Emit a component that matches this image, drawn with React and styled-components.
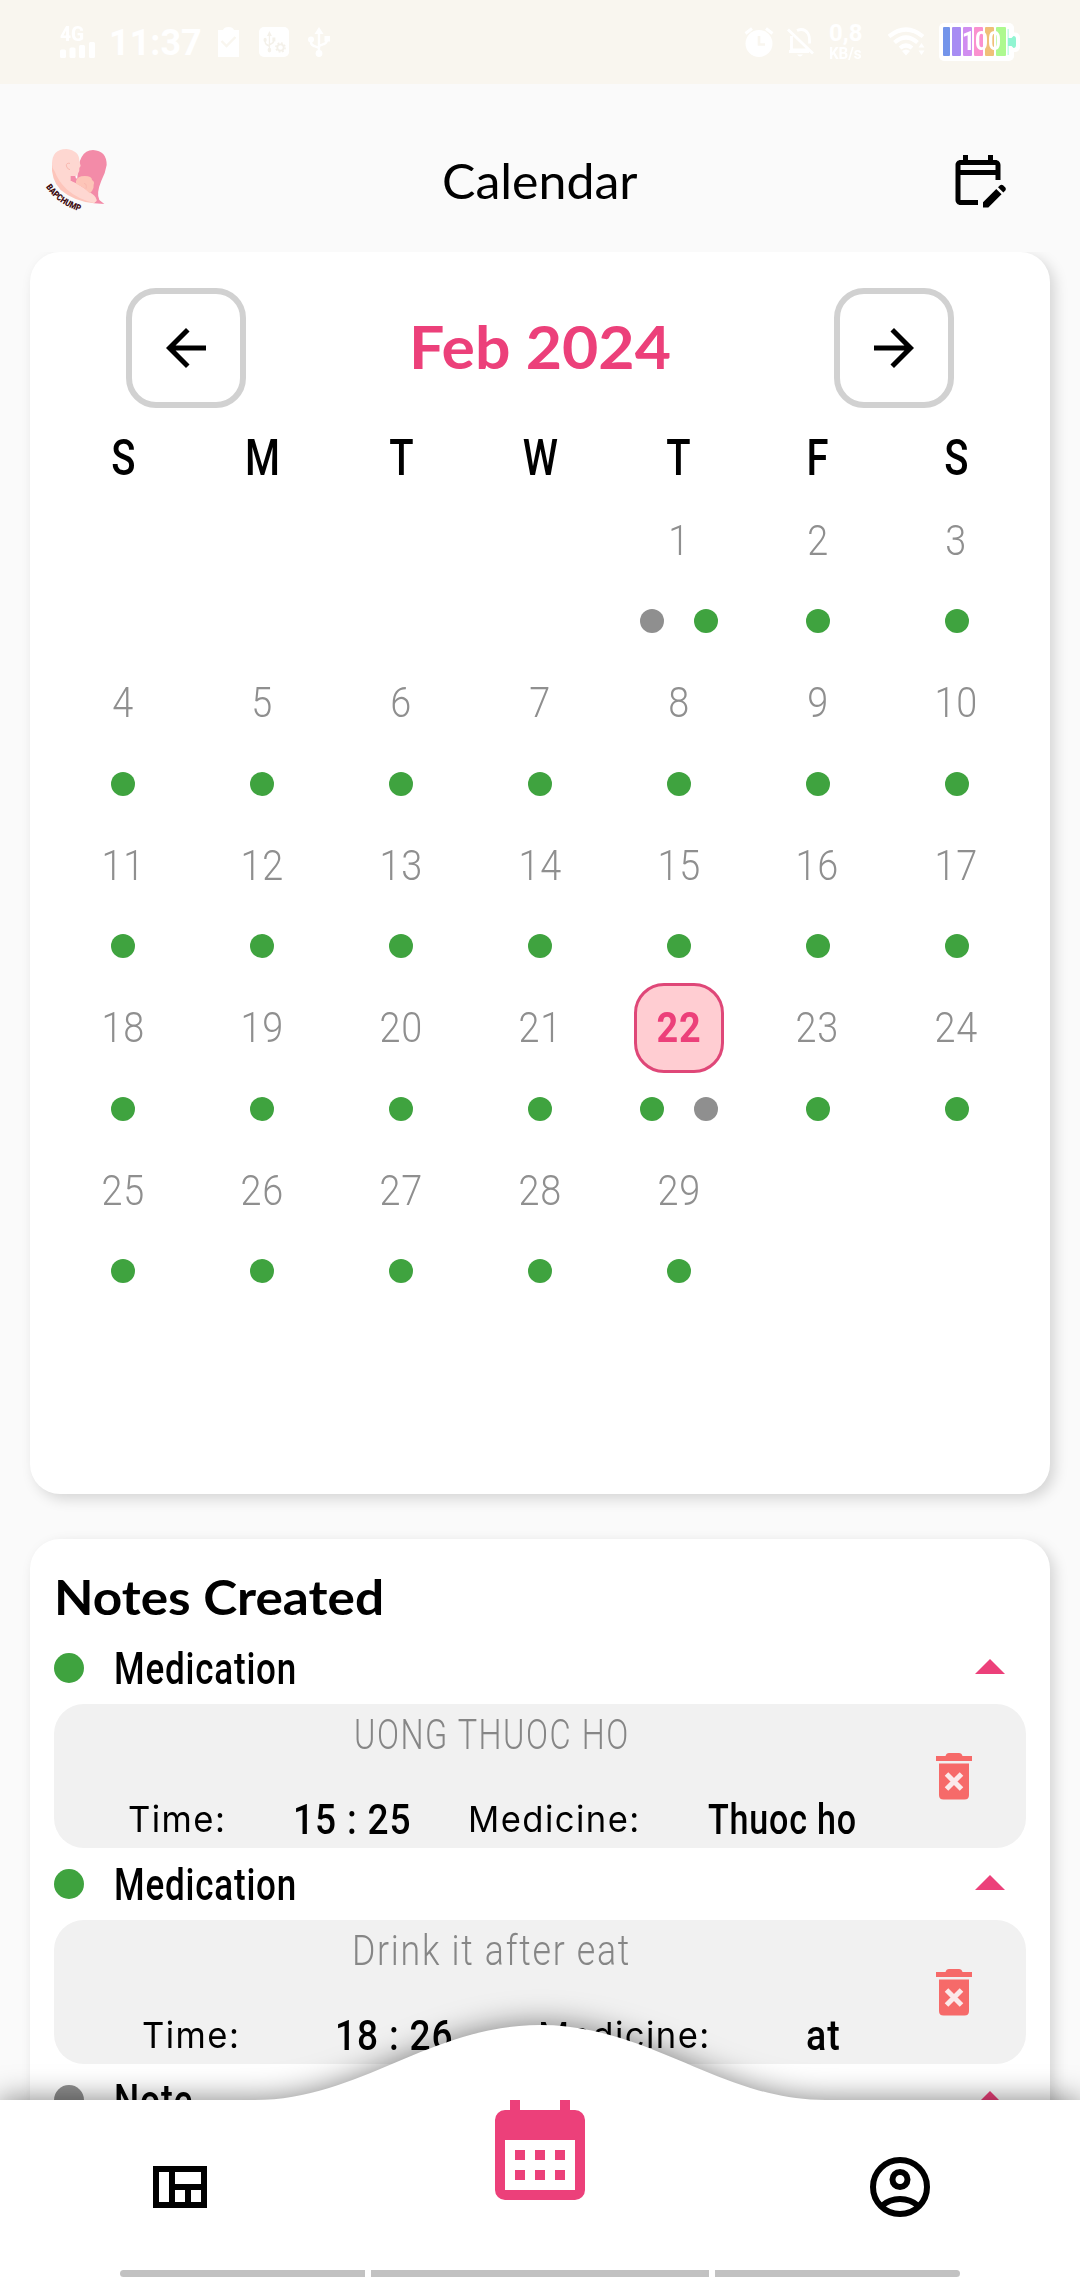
import React, { useLayoutEffect, useRef, useState } from "react";
import styled, { createGlobalStyle, css } from "styled-components";

const PINK = "#ec407a";
const GREEN = "#3fa33f";
const GREY = "#8f8f8f";

const Global = createGlobalStyle`
  * { box-sizing: border-box; }
  body { margin: 0; background: #fafafa; }
`;

const geometric = css`font-family: Lato, "Open Sans", sans-serif;`;
const narrow = css`font-family: Roboto, "Liberation Sans", sans-serif;`;

const Screen = styled.div`
  width: 1080px;
  height: 2280px;
  overflow: hidden;
  display: flex;
  flex-direction: column;
  background: #fafafa;
  color: #000;
  ${narrow}
  svg { display: block; flex: none; }
`;

/* Text set to an exact width: measured once, then scaled horizontally */
const FitBox = styled.span`
  display: block;
  width: ${(p) => p.$w}px;
  white-space: nowrap;
  text-align: left;
`;
const FitInner = styled.span`
  display: inline-block;
  transform-origin: 0 50%;
`;
function Fit({ w, children, className }) {
  const ref = useRef(null);
  const [scale, setScale] = useState(1);
  useLayoutEffect(() => {
    setScale(w / ref.current.offsetWidth);
  }, [w]);
  return (
    <FitBox $w={w} className={className}>
      <FitInner ref={ref} style={{ transform: `scaleX(${scale})` }}>{children}</FitInner>
    </FitBox>
  );
}

/* ---------- status bar ---------- */
const StatusBar = styled.div`
  flex: none;
  height: 84px;
  padding: 0 60px;
  display: flex;
  align-items: center;
  justify-content: space-between;
  background: #f9f6ef;
  color: #fff;
`;
const StatusGroup = styled.div`
  display: flex;
  align-items: center;
`;
const Slot = styled.div`
  margin-left: ${(p) => p.$gap || 0}px;
`;
const Signal = styled.div`
  width: 35px;
  height: 30px;
  display: flex;
  flex-direction: column;
  justify-content: space-between;
`;
const Network = styled(Fit)`
  font-size: 20px;
  font-weight: 800;
  line-height: 15px;
  height: 15px;
`;
const Clock = styled(Fit)`
  font-size: 36px;
  font-weight: 700;
  line-height: 36px;
  transform: translateY(1px);
`;
const Speed = styled.div`
  height: 38px;
  font-weight: 700;
  display: flex;
  flex-direction: column;
  justify-content: space-between;
`;
const SpeedValue = styled(Fit)`
  font-size: 24px;
  line-height: 20px;
  height: 20px;
`;
const SpeedUnit = styled(Fit)`
  font-size: 16px;
  line-height: 14px;
  height: 14px;
`;
const Battery = styled.div`
  position: relative;
  width: 81px;
  height: 38px;
`;
const Charge = styled(Fit)`
  position: absolute;
  left: 23px;
  top: 7px;
  font-size: 25px;
  font-weight: 700;
  line-height: 24px;
`;

const usbPath = (
  <>
    <path d="M11 3v22M3 12v3q0 3 3 4l5 2M19 10v2q0 4-3 5l-5 2" fill="none" stroke="currentColor" strokeWidth="2.4" />
    <path d="M11 0l4.5 7h-9z" fill="currentColor" />
    <circle cx="3" cy="12.5" r="3" fill="currentColor" />
    <rect x="16.5" y="9" width="5.5" height="5.5" fill="currentColor" />
    <circle cx="11" cy="26.5" r="3.4" fill="currentColor" />
  </>
);

function Status() {
  const cells = [
    [4, 7, "#7394ea"], [13, 9, "#a78cf3"], [24, 9, "#d08ef0"],
    [35, 9, "#fa91cf"], [46, 9, "#efc078"], [57, 10, "#adf98f"],
  ];
  return (
    <StatusBar>
      <StatusGroup>
        <Signal>
          <Network w={24}>4G</Network>
          <svg width="35" height="16" viewBox="0 0 35 16" fill="#fff">
            <rect x="0" y="7.5" width="6" height="8.5" rx="1.5" />
            <rect x="9.5" y="5.5" width="6" height="10.5" rx="1.5" />
            <rect x="19" y="3" width="6" height="13" rx="1.5" />
            <rect x="29" y="0" width="6" height="16" rx="1.5" />
          </svg>
        </Signal>
        <Slot $gap={14}><Clock w={93}>11:37</Clock></Slot>
        <Slot $gap={16}>
          <svg width="21" height="30" viewBox="0 0 21 30">
            <path d="M0 3h5q1-3 5.500-3t5.500 3h5v27H0z" fill="#fff" />
            <path d="M3.500 14l5 5 9-9" fill="none" stroke="#f9f6ef" strokeWidth="2.400" />
          </svg>
        </Slot>
        <Slot $gap={20}>
          <svg width="30" height="30" viewBox="0 0 30 30" color="#f4f1ea">
            <rect width="30" height="30" rx="5" fill="#fff" />
            <g transform="translate(4.500 4) scale(.54 .72)">{usbPath}</g>
            <circle cx="21.500" cy="20.500" r="3.200" fill="#fff" stroke="#f4f1ea" strokeWidth="1.800" />
            <circle cx="21.500" cy="20.500" r="4.600" fill="none" stroke="#f4f1ea" strokeWidth="1.500" strokeDasharray="1.800 1.810" />
          </svg>
        </Slot>
        <Slot $gap={19}>
          <svg width="22" height="30" viewBox="0 0 22 30">{usbPath}</svg>
        </Slot>
      </StatusGroup>
      <StatusGroup>
        <svg width="30" height="30" viewBox="0 0 30 30">
          <circle cx="15" cy="16.500" r="13.500" fill="#fff" />
          <path d="M1.500 6.500L8 1.500M28.500 6.500L22 1.500" stroke="#fff" strokeWidth="3" />
          <path d="M15 9v8.500h6" fill="none" stroke="#f9f6ef" strokeWidth="2.600" />
        </svg>
        <Slot $gap={13}>
          <svg width="28" height="30" viewBox="0 0 28 30" fill="none" stroke="#fff" strokeWidth="2.800">
            <path d="M1 2.500l25 24M4.500 9v14H22M2 24.500h20M10 3.500q7-3 11 3 2 3 1.500 10" />
            <path d="M10 27.500h6q-3 4-6 0z" fill="#fff" stroke="none" />
          </svg>
        </Slot>
        <Slot $gap={14}>
          <Speed>
            <SpeedValue w={33}>0,8</SpeedValue>
            <SpeedUnit w={33}>KB/s</SpeedUnit>
          </Speed>
        </Slot>
        <Slot $gap={26}>
          <svg width="37" height="30" viewBox="0 0 37 30" fill="none" stroke="#fff" strokeWidth="4.200">
            <path d="M1 9.500q17-14 34 0M6.500 15.500q11.500-10 23 0M12 21q6-5 12 0" />
            <path d="M14 24q4-3 8 0l-4 4.500zM30.500 20.500l3-4.500 3 4.500zM30.500 23.500l3 4.500 3-4.500z" fill="#fff" stroke="none" />
          </svg>
        </Slot>
        <Slot $gap={14}>
          <Battery>
            <svg width="81" height="38" viewBox="0 0 81 38">
              <rect width="75" height="38" rx="5" fill="#fff" />
              <rect x="68" y="9.500" width="13" height="19.500" rx="5" fill="#fff" />
              {cells.map(([x, w, c]) => (
                <rect key={x} x={x} y="4" width={w} height="29" rx="1" fill={c} />
              ))}
              <path d="M69.500 6v9h3l2-2q2.500 0 2.500 3v6q0 3-2.500 3l-2-2h-3v9h-.8V6z" fill="#91f5d2" />
            </svg>
            <Charge w={39}>100</Charge>
          </Battery>
        </Slot>
      </StatusGroup>
    </StatusBar>
  );
}

/* ---------- header ---------- */
const Header = styled.header`
  flex: none;
  height: 168px;
  padding: 24px 45px 0;
  display: grid;
  grid-template-columns: 1fr auto 1fr;
  align-items: center;
`;
const Title = styled(Fit)`
  ${geometric}
  font-size: 48px;
  line-height: 56px;
  padding-top: 1px;
`;
const HeaderAction = styled.div`
  justify-self: end;
  margin-right: 27px;
`;

function Logo() {
  return (
    <svg width="66" height="70" viewBox="43 45 198 210">
      <path d="M140 145Q142 60 187 60Q228 62 228 105Q224 130 212 152Q196 190 206 210L221 222L190 220L118 150Z" fill="#f38ba8" />
      <path d="M64 97Q60 150 90 180Q130 214 190 220L198 210L120 160L70 100Z" fill="#fdc5bb" />
      <path d="M64 103Q64 57 107 57Q146 62 146 92L150 108L146 114Q147 124 143 128Q140 139 131 138L122 138V153Q140 160 160 174L186 193Q198 202 198 213L190 219Q140 207 108 178Q82 152 73 126Q64 116 64 103Z" fill="#fed7d1" />
      <path d="M120 138H134L138 154L120 153Z" fill="#f38ba8" />
      <path d="M136 153Q140 138 162 138Q184 138 184 150Q193 155 189 164Q190 176 184 183L177 190Q158 170 136 161Z" fill="#fdc5b8" />
      <path d="M118 100Q106 98 107 108Q110 118 118 119M160 160Q170 162 166 176" fill="none" stroke="#f9b9b0" strokeWidth="3" />
      <path id="logo-arc" d="M45 171Q82 224 150 245" fill="none" />
      <text fill="#3c0a10" fontFamily="Roboto, sans-serif" fontSize="27" fontWeight="900">
        <textPath href="#logo-arc" textLength="128" lengthAdjust="spacingAndGlyphs">BAPCHUMP</textPath>
      </text>
    </svg>
  );
}

/* ---------- cards ---------- */
const Main = styled.main`
  flex: 1;
  min-height: 0;
  overflow: hidden;
  padding: 0 30px;
  display: flex;
  flex-direction: column;
  gap: 45px;
`;
const Card = styled.section`
  flex: none;
  height: ${(p) => p.$h}px;
  padding: ${(p) => p.$pad};
  border-radius: 30px;
  background: #fff;
  box-shadow: 5px 5px 14px rgba(0, 0, 0, 0.15);
`;

/* ---------- calendar ---------- */
const MonthBar = styled.div`
  display: flex;
  align-items: center;
  justify-content: space-between;
  padding: 0 72px;
`;
const MonthButton = styled.button`
  width: 120px;
  height: 120px;
  padding: 0;
  display: grid;
  place-items: center;
  border: 6px solid #d1d1d1;
  border-radius: 30px;
  background: #fff;
`;
const Month = styled(Fit)`
  ${geometric}
  margin-top: -3px;
  font-size: 59px;
  font-weight: 700;
  line-height: 70px;
  color: ${PINK};
`;
const Week = styled.div`
  display: grid;
  grid-template-columns: repeat(7, 1fr);
  text-align: center;
`;
const WeekHead = styled(Week)`
  height: 87px;
  padding-top: 12px;
  line-height: 76px;
  font-size: 50px;
  font-weight: 500;
`;
const Condensed = styled.span`
  display: inline-block;
  transform: scaleX(${(p) => p.$x});
`;
const Day = styled.div`
  height: 162.5px;
  display: flex;
  flex-direction: column;
  align-items: center;
  gap: 24px;
`;
const DayNumber = styled.div`
  width: 90px;
  height: 90px;
  display: grid;
  place-items: center;
  font-size: 42px;
  font-weight: 300;
  letter-spacing: 1px;
  color: ${GREY};
  border: 3px solid transparent;
  border-radius: 30px;
  ${(p) => p.$selected && css`
    color: ${PINK};
    font-weight: 700;
    background: #ffcdd2;
    border-color: #df4778;
  `}
`;
const Dots = styled.div`
  display: flex;
  gap: 30px;
`;
const Dot = styled.i`
  display: block;
  flex: none;
  width: ${(p) => p.$size}px;
  height: ${(p) => p.$size}px;
  border-radius: 50%;
  background: ${(p) => p.$color};
`;

const marks = { 1: [GREY, GREEN], 22: [GREEN, GREY] };
const cells = [null, null, null, null, ...Array.from({ length: 29 }, (_, i) => i + 1)];

function Calendar() {
  return (
    <Card $h={1242} $pad="36px 24px 0">
      <MonthBar>
        <MonthButton aria-label="Previous month">
          <svg width="60" height="60" viewBox="0 0 24 24"><path d="M20 11H7.830l5.590-5.590L12 4l-8 8 8 8 1.410-1.410L7.830 13H20v-2z" /></svg>
        </MonthButton>
        <Month w={262}>Feb 2024</Month>
        <MonthButton aria-label="Next month">
          <svg width="60" height="60" viewBox="0 0 24 24"><path d="M12 4l-1.410 1.410L16.170 11H4v2h12.170l-5.580 5.590L12 20l8-8z" /></svg>
        </MonthButton>
      </MonthBar>
      <WeekHead>
        {["S", "M", "T", "W", "T", "F", "S"].map((d, i) => (
          <Condensed key={i} $x={0.8}>{d}</Condensed>
        ))}
      </WeekHead>
      <Week>
        {cells.map((n, i) => (
          <Day key={i}>
            {n && (
              <>
                <DayNumber $selected={n === 22}><Condensed $x={0.9}>{n}</Condensed></DayNumber>
                <Dots>
                  {(marks[n] || [GREEN]).map((c, k) => <Dot key={k} $size={24} $color={c} />)}
                </Dots>
              </>
            )}
          </Day>
        ))}
      </Week>
    </Card>
  );
}

/* ---------- notes ---------- */
const NotesTitle = styled(Fit)`
  ${geometric}
  height: 69px;
  line-height: 69px;
  font-size: 47px;
  font-weight: 700;
`;
const NoteHead = styled.div`
  height: 72px;
  display: flex;
  align-items: center;
  gap: 30px;
`;
const NoteKind = styled(Fit)`
  padding-top: 2px;
  font-size: 44px;
  font-weight: 500;
  letter-spacing: 1px;
  line-height: 70px;
`;
const Caret = styled.div`
  margin-left: auto;
`;
const NoteBody = styled.div`
  height: 144px;
  display: grid;
  grid-template-columns: 873px 36px;
  column-gap: 9px;
  align-items: center;
  border-radius: 30px;
  background: #f1f1f1;
`;
const NoteContent = styled.div`
  height: 144px;
`;
const Description = styled(Fit)`
  margin: 0 auto;
  padding: 2px 0 0 1px;
  font-size: 42px;
  font-weight: 300;
  letter-spacing: 2px;
  line-height: 58px;
  color: #868686;
`;
const Fields = styled.div`
  height: 84px;
  padding: 26px 0 0 ${(p) => p.$start}px;
  display: flex;
  align-items: center;
  gap: ${(p) => p.$gap}px;
`;
const Label = styled(Fit)`
  font-family: Inter, Roboto, sans-serif;
  font-size: 36px;
  letter-spacing: 1.5px;
  line-height: 50px;
`;
const MedicineLabel = styled(Label)`
  margin-left: -12px;
`;
const Value = styled(Fit)`
  font-size: 43px;
  font-weight: 500;
  letter-spacing: 1px;
  line-height: 50px;
`;
const Time = styled(Value)`
  margin-left: -2px;
`;
const Medicine = styled(Value)`
  margin-left: -2px;
`;

function Note({ kind, kindWidth, color, text, textWidth, time, medicine, medicineWidth, start, gap }) {
  return (
    <article>
      <NoteHead>
        <Dot $size={30} $color={color} />
        <NoteKind w={kindWidth}>{kind}</NoteKind>
        <Caret><svg width="72" height="72" viewBox="0 0 24 24"><path d="M7 14l5-5 5 5z" fill={PINK} /></svg></Caret>
      </NoteHead>
      {text && (
        <NoteBody>
          <NoteContent>
            <Description w={textWidth}>{text}</Description>
            <Fields $start={start} $gap={gap}>
              <Label w={98}>Time:</Label>
              <Time w={118}>{time}</Time>
              <MedicineLabel w={173}>Medicine:</MedicineLabel>
              <Medicine w={medicineWidth}>{medicine}</Medicine>
            </Fields>
          </NoteContent>
          <svg width="36" height="47" viewBox="0 0 36 47" fill="#f66a69">
            <path d="M0 3h9.500q.8-3 3.500-3h10q2.700 0 3.500 3H36v5H0zM3 10.500h30V42q0 4.500-4.500 4.500h-21Q3 46.500 3 42z" />
            <path d="M10.500 21l15 15M25.500 21l-15 15" stroke="#fbeaea" strokeWidth="5" />
          </svg>
        </NoteBody>
      )}
    </article>
  );
}

/* ---------- bottom navigation ---------- */
const Nav = styled.nav`
  position: relative;
  flex: none;
  height: 180px;
`;
const Wave = styled.svg`
  position: absolute;
  left: 0;
  top: -75px;
  overflow: visible;
  filter: drop-shadow(0 0 15px rgba(0, 0, 0, 0.5));
`;
const NavItems = styled.div`
  position: relative;
  height: 170px;
  display: grid;
  grid-template-columns: repeat(3, 1fr);
  justify-items: center;
  align-items: start;
`;
const NavItem = styled.div`
  margin-top: ${(p) => p.$top}px;
`;
const Gesture = styled.div`
  position: relative;
  height: 7px;
  margin: 0 120px;
  border-radius: 4px;
  overflow: hidden;
  display: grid;
  grid-template-columns: 245px 338px 245px;
  gap: 6px;
`;
const GestureBar = styled.i`
  background: #c2c2c2;
`;

export default function App() {
  return (
    <Screen>
      <Global />
      <Status />
      <Header>
        <Logo />
        <Title w={196}>Calendar</Title>
        <HeaderAction>
          <svg width="60" height="60" viewBox="0 0 24 24">
            <path d="M5 10h14v2h2V6c0-1.100-.9-2-2-2h-1V2h-2v2H8V2H6v2H5c-1.110 0-1.990.9-1.990 2L3 20c0 1.100.89 2 2 2h7v-2H5V10zm0-4h14v2H5V6zm17.840 10.280-.71.71-2.120-2.120.71-.71c.39-.39 1.020-.39 1.410 0l.71.71c.39.39.39 1.020 0 1.410zm-3.540-.7 2.120 2.120-5.300 5.300H14v-2.120l5.300-5.300z" />
          </svg>
        </HeaderAction>
      </Header>
      <Main>
        <Calendar />
        <Card $h={780} $pad="24px 24px 0">
          <NotesTitle w={330}>Notes Created</NotesTitle>
          <Note kind="Medication" kindWidth={183} color={GREEN} text="UONG THUOC HO" textWidth={276} time="15 : 25" medicine="Thuoc ho" medicineWidth={149} start={74} gap={69} />
          <Note kind="Medication" kindWidth={183} color={GREEN} text="Drink it after eat" textWidth={279} time="18 : 26" medicine="at" medicineWidth={35} start={88} gap={97} />
          <Note kind="Note" kindWidth={79} color={GREY} />
        </Card>
      </Main>
      <Nav>
        <Wave width="1080" height="255" viewBox="0 0 1080 255">
          <path d="M0 75H255C360 75 430 0 540 0S720 75 825 75H1080V255H0Z" fill="#fff" />
        </Wave>
        <NavItems>
          <NavItem $top={51}>
            <svg width="72" height="72" viewBox="0 0 24 24">
              <path fillRule="evenodd" d="M3 5h18v14H3zM5 7v10h3.330V7zM10.330 7v4H19V7zM10.330 13v4h3.340v-4zM15.670 13v4H19v-4z" />
            </svg>
          </NavItem>
          <NavItem $top={-5}>
            <svg width="120" height="120" viewBox="0 0 24 24" fill={PINK}>
              <path fillRule="evenodd" d="M6 1h2v2h8V1h2v2h1a2 2 0 0 1 2 2v14a2 2 0 0 1-2 2H5a2 2 0 0 1-2-2V5a2 2 0 0 1 2-2h1zM5 9v10h14V9z" />
              <path d="M7 11h2v2H7zM11 11h2v2h-2zM15 11h2v2h-2zM7 15h2v2H7zM11 15h2v2h-2zM15 15h2v2h-2z" />
            </svg>
          </NavItem>
          <NavItem $top={51}>
            <svg width="72" height="72" viewBox="0 0 24 24" fill="none" stroke="#000" strokeWidth="2">
              <circle cx="12" cy="12" r="9" />
              <circle cx="12" cy="9.500" r="2.500" />
              <path d="M5.900 18.300C7.600 16.800 9.700 16 12 16s4.400.8 6.100 2.300" />
            </svg>
          </NavItem>
        </NavItems>
        <Gesture><GestureBar /><GestureBar /><GestureBar /></Gesture>
      </Nav>
    </Screen>
  );
}
